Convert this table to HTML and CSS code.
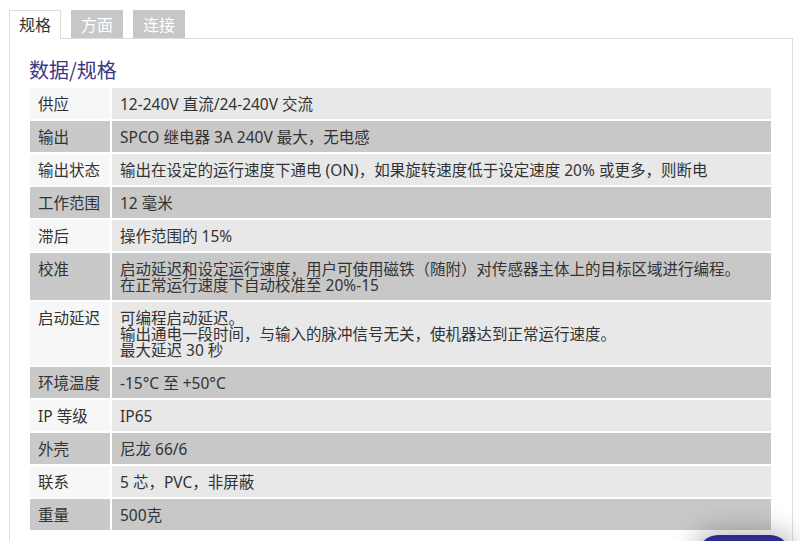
FILE: index.html
```html
<!DOCTYPE html>
<html lang="zh">
<head>
<meta charset="utf-8">
<title>规格</title>
<link rel="stylesheet" href="styles.css">
</head>
<body>
<div class="wrap">
  <div class="tabs">
    <div class="tab active">规格</div>
    <div class="tab">方面</div>
    <div class="tab">连接</div>
  </div>
  <div class="panel">
    <h2 class="title">数据/规格</h2>
    <table class="spec">
      <tr class="light"><th>供应</th><td>12-240V 直流/24-240V 交流</td></tr>
      <tr class="dark"><th>输出</th><td>SPCO 继电器 3A 240V 最大，无电感</td></tr>
      <tr class="light"><th>输出状态</th><td>输出在设定的运行速度下通电 (ON)，如果旋转速度低于设定速度 20% 或更多，则断电</td></tr>
      <tr class="dark"><th>工作范围</th><td>12 毫米</td></tr>
      <tr class="light"><th>滞后</th><td>操作范围的 15%</td></tr>
      <tr class="dark"><th>校准</th><td>启动延迟和设定运行速度，用户可使用磁铁（随附）对传感器主体上的目标区域进行编程。<br>在正常运行速度下自动校准至 20%-15</td></tr>
      <tr class="light"><th>启动延迟</th><td>可编程启动延迟。<br>输出通电一段时间，与输入的脉冲信号无关，使机器达到正常运行速度。<br>最大延迟 30 秒</td></tr>
      <tr class="dark"><th>环境温度</th><td>-15°C 至 +50°C</td></tr>
      <tr class="light"><th>IP 等级</th><td>IP65</td></tr>
      <tr class="dark"><th>外壳</th><td>尼龙 66/6</td></tr>
      <tr class="light"><th>联系</th><td>5 芯，PVC，非屏蔽</td></tr>
      <tr class="dark"><th>重量</th><td>500克</td></tr>
    </table>
  </div>
</div>
<div class="chat-btn"></div>
</body>
</html>
```

FILE: styles.css
```css
html, body {
  margin: 0;
  padding: 0;
  background: #fff;
  height: 541px;
  overflow: hidden;
}
body {
  font-family: "Noto Sans", "Noto Sans CJK SC", sans-serif;
  color: #333;
  position: relative;
}
.wrap {
  padding: 10px 7px 0 9px;
}
.tabs {
  display: flex;
  gap: 10px;
  padding-left: 1px;
  height: 28px;
  position: relative;
  z-index: 1;
}
.tab {
  width: 52px;
  height: 28px;
  box-sizing: border-box;
  background: #c8c8c8;
  color: #fff;
  font-family: "Noto Sans CJK SC", sans-serif;
  font-size: 16px;
  line-height: 28px;
  text-align: center;
}
.tab.active {
  background: #fff;
  color: #333;
  border: 1px solid #ddd;
  border-bottom: 1px solid #fff;
  height: 29px;
  line-height: 27px;
  margin-left: -1px;
}
.panel {
  border: 1px solid #ddd;
  height: 600px;
  box-sizing: border-box;
}
.title {
  margin: 17px 0 2px 19px;
  font-family: "Noto Sans CJK SC", sans-serif;
  font-weight: 400;
  font-size: 20px;
  line-height: 28px;
  color: #3c3887;
}
.spec {
  margin-left: 18px;
  width: 745px;
  border-collapse: separate;
  border-spacing: 2px;
  font-size: 15.5px;
  line-height: 16px;
}
.spec th, .spec td {
  text-align: left;
  vertical-align: top;
  font-weight: 400;
  padding: 8px 8px 7px 8px;
  color: #333;
}
.spec th {
  width: 64px;
  white-space: nowrap;
}
.light th { background: #f7f7f7; }
.light td { background: #e8e8e8; }
.dark th { background: #c9c9c9; }
.dark td { background: #c8c8c8; }
.chat-btn {
  position: absolute;
  right: 10px;
  top: 535px;
  width: 92px;
  height: 40px;
  border-radius: 20px;
  background: #2e2a8f;
  box-shadow: 0 0 24px 6px rgba(0,0,0,0.25);
}
```
